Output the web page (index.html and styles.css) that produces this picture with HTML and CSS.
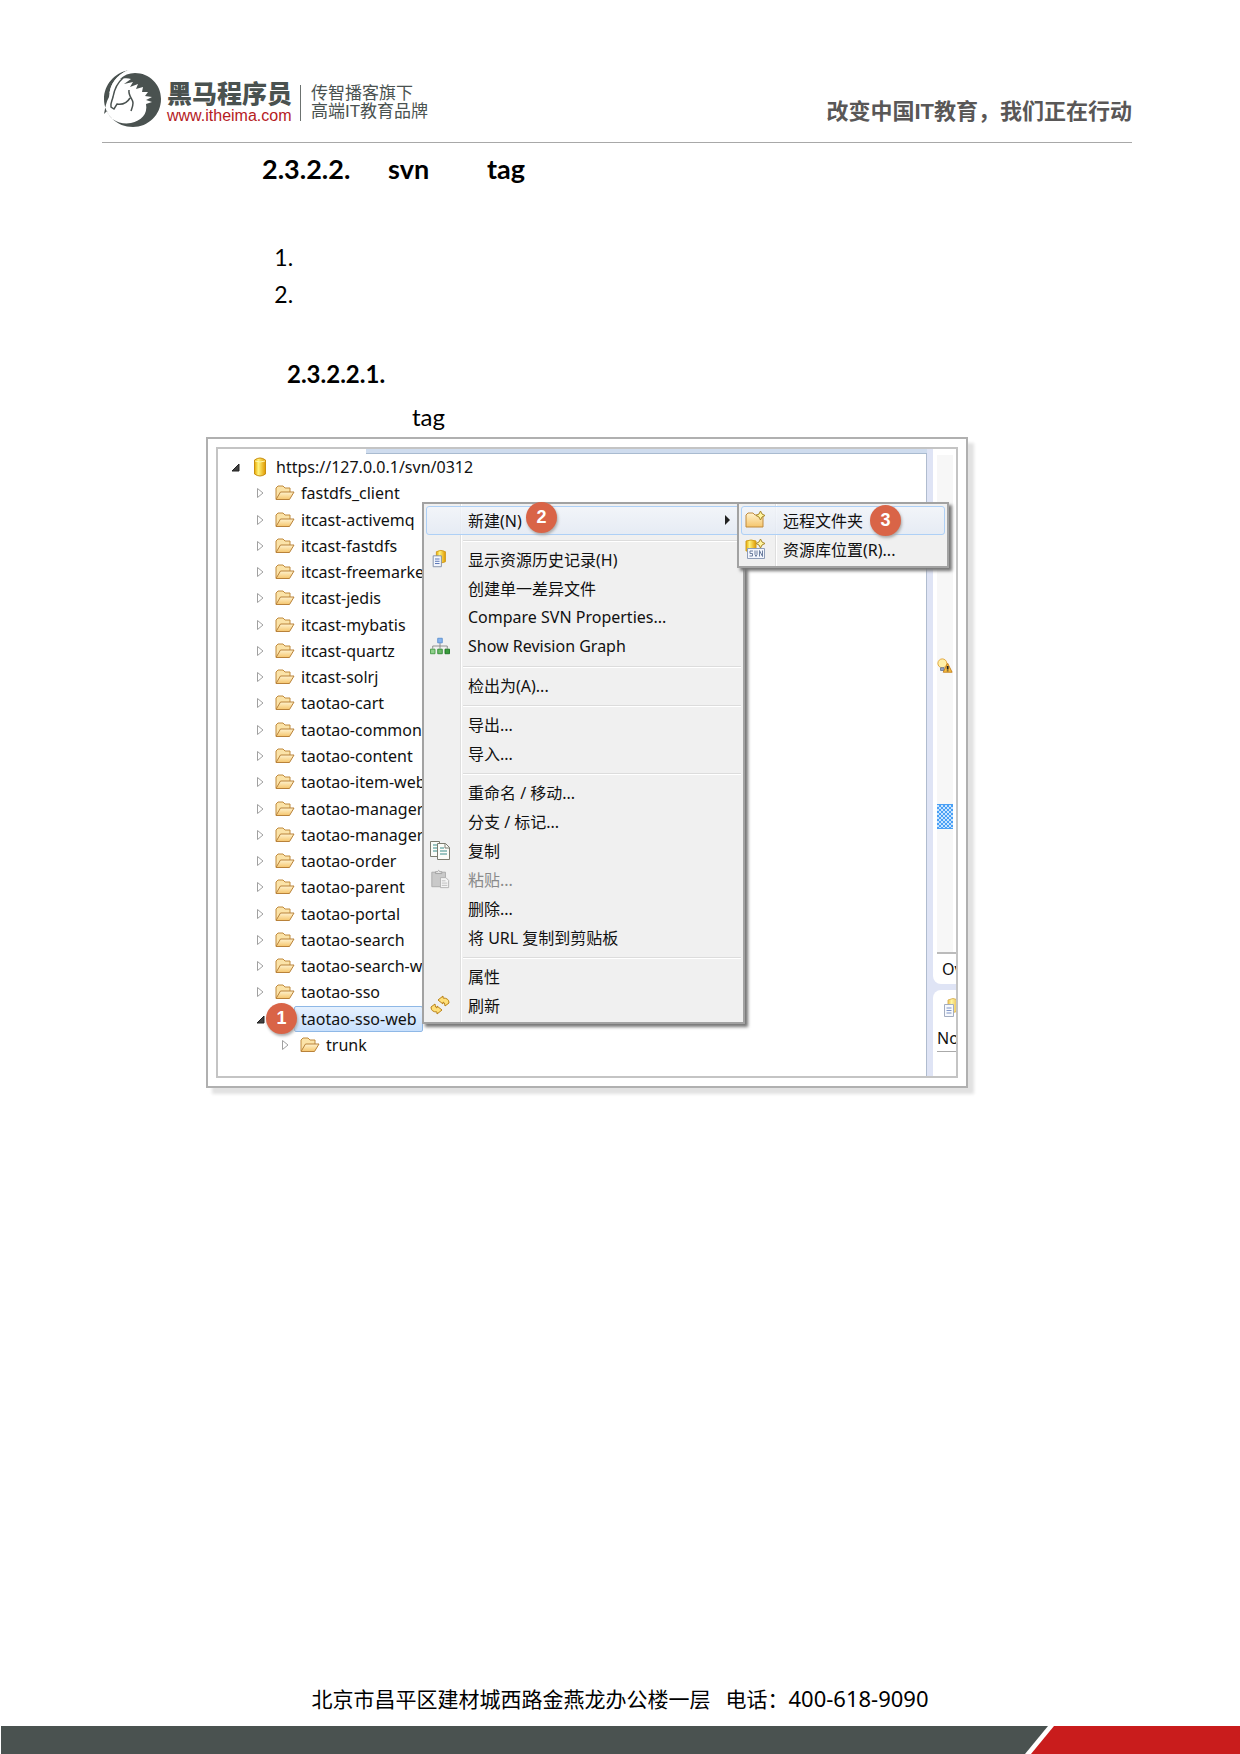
FILE: index.html
```
<!DOCTYPE html>
<html lang="zh-CN">
<head>
<meta charset="utf-8">
<title>svn tag</title>
<link rel="stylesheet" href="styles.css">
</head>
<body>
<svg class="defs" aria-hidden="true">
  <defs>
    <linearGradient id="gold" x1="0" x2="1"><stop offset="0" stop-color="#e8a800"/><stop offset=".35" stop-color="#fff27a"/><stop offset="1" stop-color="#e09a00"/></linearGradient>
    <linearGradient id="paper" x1="0" y1="0" x2="0" y2="1"><stop offset="0" stop-color="#fff3cf"/><stop offset="1" stop-color="#f5c56c"/></linearGradient>
    <symbol id="folder" viewBox="0 0 20 16"><path d="M1 14V3l2-2h5l2 2h5v4" fill="#fbe3a8" stroke="#c08a3c"/><path d="M1 14.500L5.500 7H19l-4.500 7.500z" fill="url(#paper)" stroke="#b9823a"/></symbol>
    <symbol id="closed" viewBox="0 0 12 12"><path d="M2.500 1.500v9L8 6z" fill="#fff" stroke="#a0a0a0"/></symbol>
    <symbol id="opened" viewBox="0 0 12 12"><path d="M9 3v7H2z" fill="#404040" stroke="#222"/></symbol>
    <symbol id="history" viewBox="0 0 18 22"><path d="M5 3q5-3 10 0v11q-5 3-10 0z" fill="url(#gold)" stroke="#d09a20"/><path d="M1.500 7.500h9v12h-9z" fill="#f4f7fd" stroke="#7d8ba5"/><path d="M3.500 11h5M3.500 13.500h5M3.500 16h5" stroke="#4a68ae"/></symbol>
  </defs>
</svg>

<header class="page-head">
  <div class="brand">
    <svg class="logo" viewBox="0 0 60 60" aria-hidden="true">
      <path d="M27 1C12 4 2 16 2 30c0 16 13 28 29 28 15 0 28-12 28-28C59 15 47 4 33 4c-6 0-11 2-15 6 5-1 8-1 11 0l-7 5 9-2-3 5 8-3-2 5 7-2-1 5 6 0-3 4 7 1-6 3 6 2-6 2c2 10-5 17-15 19-12 2-22-4-24-12l-3 3C3 40 4 33 7 28 8 15 14 6 27 1z" fill="#4a5250"/>
      <path d="M8 24C9 14 16 6 27 1" fill="none" stroke="#fff" stroke-width="1"/>
      <path d="M21 9C14 15 12 22 11 28c-1 4-3 7-2 10l3 2 3-5c6 1 10-1 13-6M27 21c-1 6 4 9 4 13 0 3-1 5-2 8" fill="none" stroke="#4a5250" stroke-width="1.500"/>
    </svg>
    <div class="brand-name"><strong>黑马程序员</strong><a href="#">www.itheima.com</a></div>
    <p class="tagline">传智播客旗下<br>高端IT教育品牌</p>
  </div>
  <p class="slogan">改变中国IT教育，我们正在行动</p>
</header>

<main class="doc">
  <h4 class="section"><span>2.3.2.2.</span><span>svn</span><span>tag</span></h4>
  <ol class="steps"><li></li><li></li></ol>
  <h5 class="subsection">2.3.2.2.1.</h5>
  <p class="lead">tag</p>

  <figure class="frame">
    <div class="shot">
      <ul class="tree">
        <li class="root"><svg class="arrow"><use href="#opened"/></svg><svg class="db" viewBox="0 0 14 20"><path d="M1.500 3q5.500-4 11 0v14q-5.500 4-11 0z" fill="url(#gold)" stroke="#c98f10"/><path d="M2 4q5 2 10 0" fill="none" stroke="#fff6a8"/></svg>https://127.0.0.1/svn/0312</li>
        <li><svg class="arrow"><use href="#closed"/></svg><svg class="folder"><use href="#folder"/></svg>fastdfs_client</li>
        <li><svg class="arrow"><use href="#closed"/></svg><svg class="folder"><use href="#folder"/></svg>itcast-activemq</li>
        <li><svg class="arrow"><use href="#closed"/></svg><svg class="folder"><use href="#folder"/></svg>itcast-fastdfs</li>
        <li><svg class="arrow"><use href="#closed"/></svg><svg class="folder"><use href="#folder"/></svg>itcast-freemarke</li>
        <li><svg class="arrow"><use href="#closed"/></svg><svg class="folder"><use href="#folder"/></svg>itcast-jedis</li>
        <li><svg class="arrow"><use href="#closed"/></svg><svg class="folder"><use href="#folder"/></svg>itcast-mybatis</li>
        <li><svg class="arrow"><use href="#closed"/></svg><svg class="folder"><use href="#folder"/></svg>itcast-quartz</li>
        <li><svg class="arrow"><use href="#closed"/></svg><svg class="folder"><use href="#folder"/></svg>itcast-solrj</li>
        <li><svg class="arrow"><use href="#closed"/></svg><svg class="folder"><use href="#folder"/></svg>taotao-cart</li>
        <li><svg class="arrow"><use href="#closed"/></svg><svg class="folder"><use href="#folder"/></svg>taotao-common</li>
        <li><svg class="arrow"><use href="#closed"/></svg><svg class="folder"><use href="#folder"/></svg>taotao-content</li>
        <li><svg class="arrow"><use href="#closed"/></svg><svg class="folder"><use href="#folder"/></svg>taotao-item-web</li>
        <li><svg class="arrow"><use href="#closed"/></svg><svg class="folder"><use href="#folder"/></svg>taotao-manager</li>
        <li><svg class="arrow"><use href="#closed"/></svg><svg class="folder"><use href="#folder"/></svg>taotao-manager</li>
        <li><svg class="arrow"><use href="#closed"/></svg><svg class="folder"><use href="#folder"/></svg>taotao-order</li>
        <li><svg class="arrow"><use href="#closed"/></svg><svg class="folder"><use href="#folder"/></svg>taotao-parent</li>
        <li><svg class="arrow"><use href="#closed"/></svg><svg class="folder"><use href="#folder"/></svg>taotao-portal</li>
        <li><svg class="arrow"><use href="#closed"/></svg><svg class="folder"><use href="#folder"/></svg>taotao-search</li>
        <li><svg class="arrow"><use href="#closed"/></svg><svg class="folder"><use href="#folder"/></svg>taotao-search-w</li>
        <li><svg class="arrow"><use href="#closed"/></svg><svg class="folder"><use href="#folder"/></svg>taotao-sso</li>
        <li><svg class="arrow"><use href="#opened"/></svg><svg class="folder"><use href="#folder"/></svg><span class="selected">taotao-sso-web</span></li>
        <li class="child"><svg class="arrow"><use href="#closed"/></svg><svg class="folder"><use href="#folder"/></svg>trunk</li>
      </ul>

      <div class="side">
        <div class="editor">
          <div class="ruler">
            <svg class="bulb" viewBox="0 0 18 18"><circle cx="6" cy="6" r="5" fill="#fff0a8" stroke="#dfa030"/><path d="M4 11h4v3H4z" fill="#99a9c4" stroke="#64789b"/><path d="M12 6l5 10H7z" fill="#f8bf42" stroke="#c47d16"/><path d="M12 9v4M12 14v1" stroke="#222" stroke-width="2"/></svg>
            <span class="mark"></span>
          </div>
          <span class="tab">Ov</span>
        </div>
        <div class="history">
          <svg class="history-icon"><use href="#history"/></svg>
          <span class="col">No</span>
        </div>
      </div>

      <div class="menu">
        <button class="active">新建(N)<svg class="more" viewBox="0 0 6 10"><path d="M0 0v10l5-5z" fill="#222"/></svg></button>
        <hr>
        <button><svg class="icon"><use href="#history"/></svg>显示资源历史记录(H)</button>
        <button>创建单一差异文件</button>
        <button>Compare SVN Properties...</button>
        <button><svg class="icon" viewBox="0 0 22 20"><path d="M11 6v4M3 13v-3h16v3M11 10v3" fill="none" stroke="#888"/><path d="M8.500 1.500h5v5h-5z" fill="#86b4ee" stroke="#5c8fd0"/><path d="M.500 13.500h5v5h-5z" fill="#8ed08a" stroke="#469a46"/><path d="M8.500 13.500h5v5h-5z" fill="#6dbb68" stroke="#2f8a35"/><path d="M16.500 13.500h5v5h-5z" fill="#3a9c3c" stroke="#1d7323"/></svg>Show Revision Graph</button>
        <hr>
        <button>检出为(A)...</button>
        <hr>
        <button>导出...</button>
        <button>导入...</button>
        <hr>
        <button>重命名 / 移动...</button>
        <button>分支 / 标记...</button>
        <button><svg class="icon" viewBox="0 0 20 20"><path d="M.500 1.500h9v15h-9z" fill="#fbfcf8" stroke="#7c7c70"/><path d="M3 5h5M3 8h5M3 11h5" stroke="#3b8d8a"/><path d="M7.500 3.500h8l4 4v12h-12z" fill="#fbfcf8" stroke="#7c7c70"/><path d="M15 3.500V8h4.500" fill="none" stroke="#7c7c70"/><path d="M10 8h4M10 11h7M10 14h7" stroke="#3b8d8a"/></svg>复制</button>
        <button disabled><svg class="icon" viewBox="0 0 20 22"><path d="M1 3.500h15v16H1z" fill="#c9c9c9" stroke="#a9a9a9"/><path d="M5 5V3h2q1.500-3 3 0h2v2z" fill="#e5e5e5" stroke="#a0a0a0"/><path d="M10.500 9.500h6l3 3v8h-9z" fill="#f4f4f4" stroke="#b0b0b0"/><path d="M12 13h4M12 15.500h6M12 18h6" stroke="#bbb"/></svg>粘贴...</button>
        <button>删除...</button>
        <button>将 URL 复制到剪贴板</button>
        <hr>
        <button>属性</button>
        <button><svg class="icon" viewBox="0 0 20 20"><path d="M13 1l-5 4 5 4V7q2 0 2 4l4-3Q19 3 13 3z" fill="#ffdf78" stroke="#b98218"/><path d="M7 19l5-4-5-4v2q-2 0-2-4l-4 3q0 5 6 5z" fill="#ffdf78" stroke="#b98218"/></svg>刷新</button>
      </div>

      <div class="menu submenu">
        <button class="active"><svg class="icon" viewBox="0 0 20 18"><path d="M1 16V4l2-2h5l2 2h8v12z" fill="url(#paper)" stroke="#c08a3c"/><path d="M15.500 0l1.500 3 3 1.500-3 1.500-1.500 3L14 6l-3-1.500L14 3z" fill="#fff5a0" stroke="#a8872a"/></svg>远程文件夹</button>
        <button><svg class="icon" viewBox="0 0 20 20"><path d="M1 2q5-2 10 0v10H1z" fill="url(#gold)" stroke="#d0a020"/><path d="M15.500 0l1.500 3 3 1.500-3 1.500-1.500 3L14 6l-3-1.500L14 3z" fill="#fff5a0" stroke="#a8872a"/><path d="M2.500 9.500h17v10h-17z" fill="#f3f6fd" stroke="#8e9db8"/><path d="M8 12H5v2.500h2.500V17H4.500M10 11.500v4l1 2 1-2v-4M14.500 17.500v-6l3 6v-6" fill="none" stroke="#6d7f9f"/></svg>资源库位置(R)...</button>
      </div>

      <span class="badge one">1</span>
      <span class="badge two">2</span>
      <span class="badge three">3</span>
    </div>
  </figure>
</main>

<footer class="page-foot">
  <address><span>北京市昌平区建材城西路金燕龙办公楼一层</span><span>电话：<span class="phone">400-618-9090</span></span></address>
  <div class="stripe"><span class="dark"></span><span class="red"></span></div>
</footer>
</body>
</html>
```
FILE: styles.css
```
* { box-sizing: border-box; }

body {
  margin: 0;
  min-height: 100vh;
  display: flex;
  flex-direction: column;
  background: #fff;
  color: #000;
  font-family: "Noto Sans", "Noto Sans CJK SC", sans-serif;
}

p, h4, h5, ol, ul, figure { margin: 0; padding: 0; }
.defs { position: absolute; width: 0; height: 0; }

/* Letterhead */
.page-head {
  display: flex;
  justify-content: space-between;
  align-items: flex-end;
  margin: 69px 108px 0 102px;
  padding-bottom: 13px;
  border-bottom: 1px solid #a8a8a8;
  color: #4a5250;
  font-family: "Liberation Sans", "Noto Sans CJK SC", sans-serif;
}
.brand { display: flex; align-items: center; }
.logo { width: 60px; height: 60px; }
.brand-name { display: flex; flex-direction: column; margin-left: 5px; padding-top: 8px; }
.brand-name strong { font-size: 25px; line-height: 26px; font-weight: 900; }
.brand-name a { color: #b5201e; font-size: 16px; line-height: 18px; text-decoration: none; }
.tagline {
  margin: 8px 0 0 8px;
  padding-left: 10px;
  border-left: 1px solid #6c7270;
  font-size: 17px;
  line-height: 18px;
}
.slogan { font-size: 22px; line-height: 34px; font-weight: 700; color: #595757; }

/* Body text */
.doc { font-family: Lato, sans-serif; padding: 0 206px; }
.section {
  display: grid;
  grid-template-columns: 126px 99px auto;
  margin: 10px 0 0 56px;
  font-size: 27px;
  line-height: 32px;
}
.steps { margin: 54px 0 0 93px; font-size: 23px; line-height: 37px; }
.subsection { margin: 45px 0 0 81px; font-size: 24px; line-height: 32px; }
.lead { margin: 10px 0 0 206px; font-size: 24px; line-height: 34px; }

/* Framed window */
.frame {
  width: 762px;
  margin-top: 3px;
  padding: 8px;
  border: 2px solid #b0b0b0;
  box-shadow: 6px 6px 3px #e2e2e2;
}
.shot {
  position: relative;
  display: flex;
  justify-content: space-between;
  overflow: hidden;
  border: 2px solid #c4c4c4;
  color: #111;
  font-family: "Noto Sans", "Noto Sans CJK SC", sans-serif;
  font-size: 16px;
}
.shot::before {
  content: "";
  position: absolute;
  top: 0;
  left: 148px;
  right: 29px;
  height: 4px;
  background: #cfdcee;
  border-bottom: 1px solid #a9bbd0;
}

.tree {
  display: grid;
  grid-auto-rows: 1fr;
  height: 604px;
  margin: 5px 0 18px;
  list-style: none;
}
.tree li { display: flex; align-items: center; padding-left: 37px; white-space: nowrap; }
.tree .root { padding-left: 12px; }
.tree .child { padding-left: 62px; }
.arrow { width: 12px; height: 12px; }
.folder { width: 20px; height: 16px; margin: 0 6px 0 8px; }
.db { width: 14px; height: 20px; margin: 0 9px 0 11px; }
.selected {
  margin-left: -7px;
  padding: 1px 5px 1px 6px;
  border: 1px solid #8fb8e6;
  border-radius: 2px;
  background: linear-gradient(#e6f1fe, #c8e0fd);
}

.side {
  display: flex;
  flex-direction: column;
  gap: 6px;
  width: 30px;
  padding-left: 6px;
  border-left: 1px solid #b0bccf;
  background: #dfe4f5;
}
.editor, .history { background: #fff; padding-left: 4px; overflow: hidden; }
.editor { display: flex; flex-direction: column; height: 535px; border-bottom-left-radius: 8px; }
.history { flex: 1; border-top-left-radius: 8px; }
.ruler { flex: 1; margin-top: 6px; padding-top: 203px; background: linear-gradient(90deg, #f7f7f7 16px, #fff 16px); border-bottom: 2px solid #bbb; }
.bulb { display: block; width: 16px; height: 16px; }
.mark { display: block; width: 16px; height: 25px; margin-top: 130px; border: solid #4aa0f5; border-width: 1px 0; background: repeating-conic-gradient(#4aa0f5 0 25%, #c8e4ff 0 50%) 0 0 / 4px 4px; }
.tab { padding-left: 5px; line-height: 30px; }
.history-icon { display: block; width: 18px; height: 22px; margin: 7px 0 0 6px; opacity: .7; }
.col { display: block; line-height: 26px; margin-top: 6px; border-bottom: 1px solid #aaa; }

/* Pop-up menus */
.menu {
  position: absolute;
  top: 53px;
  left: 204px;
  width: 323px;
  padding: 2px;
  border: 2px solid #a2a2a2;
  background: linear-gradient(90deg, #f0f0f0 36px, #dedede 36px 37px, #fff 37px 38px, #f0f0f0 38px);
  box-shadow: 3px 3px 3px #777;
}
.menu button {
  position: relative;
  display: flex;
  align-items: center;
  width: 100%;
  height: 29px;
  padding: 0 0 2px 42px;
  border: 0;
  background: none;
  color: #111;
  font: inherit;
  text-align: left;
  white-space: nowrap;
}
.menu button:disabled { color: #8a8a8a; }
.menu .active { outline: 1px solid #aed0f6; outline-offset: -1px; border-radius: 3px; background: linear-gradient(#f3f6fbcc, #e3eaf5cc); }
.menu hr { margin: 5px 0 3px 37px; border: 0; border-top: 1px solid #dcdcdc; border-bottom: 1px solid #fff; }
.icon { position: absolute; left: 4px; width: 20px; height: 20px; }
.more { width: 6px; height: 10px; margin-left: auto; margin-right: 10px; }
.submenu { left: 519px; width: 212px; }

.badge {
  position: absolute;
  width: 31px;
  height: 31px;
  border-radius: 50%;
  background: #d96447;
  box-shadow: 1px 2px 3px #aaa;
  color: #fff;
  font: bold 18px/31px "Liberation Sans", sans-serif;
  text-align: center;
}
.one { left: 48px; top: 554px; }
.two { left: 308px; top: 53px; }
.three { left: 652px; top: 56px; }

/* Page foot */
.page-foot { margin-top: auto; }
address { display: flex; justify-content: center; align-items: baseline; gap: 15px; margin-bottom: 11px; font-size: 21px; line-height: 32px; font-style: normal; }
.phone { font-size: 22px; }
.stripe { display: flex; height: 28px; margin-left: 1px; }
.dark { flex: 1; background: #4a5250; clip-path: polygon(0 0, 100% 0, calc(100% - 23px) 100%, 0 100%); }
.red { width: 209px; margin-left: -17px; background: #c91c1c; clip-path: polygon(23px 0, 100% 0, 100% 100%, 0 100%); }
```
